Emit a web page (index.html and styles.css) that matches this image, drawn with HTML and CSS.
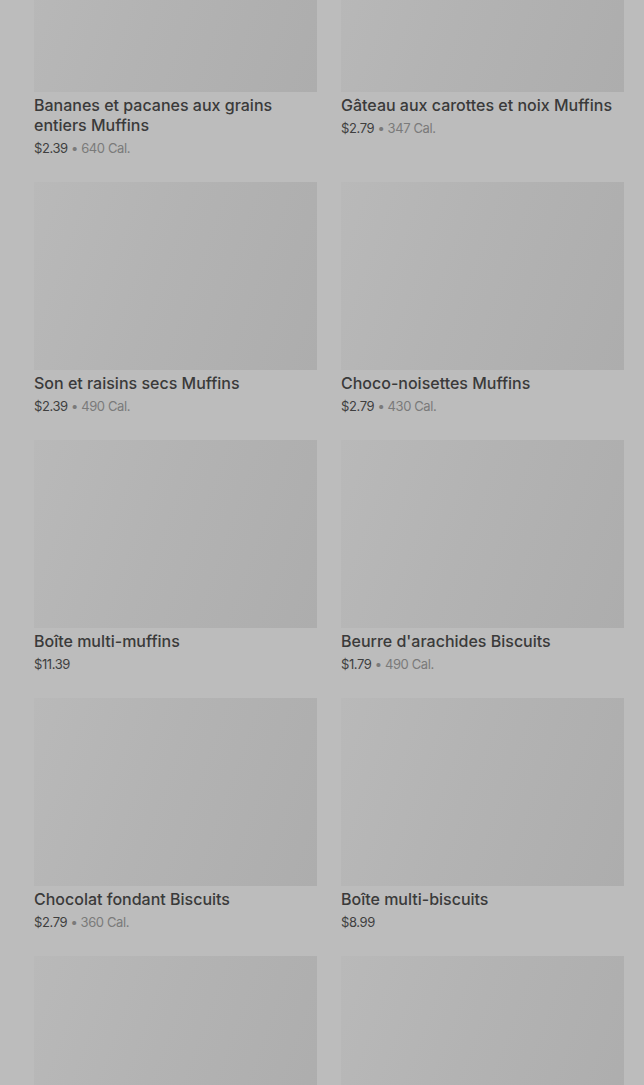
FILE: index.html
```html
<!DOCTYPE html>
<html lang="fr">
<head>
  <meta charset="UTF-8" />
  <title>Muffins et biscuits</title>
  <link rel="stylesheet" href="styles.css">
</head>
<body>
  <div class="menu-list">
    <div class="item">
      <div class="thumb"></div>
      <div class="name">Bananes et pacanes aux grains entiers Muffins</div>
      <div class="meta">$2.39 <span class="cal">• 640 Cal.</span></div>
    </div>
    <div class="item">
      <div class="thumb"></div>
      <div class="name">Gâteau aux carottes et noix Muffins</div>
      <div class="meta">$2.79 <span class="cal">• 347 Cal.</span></div>
    </div>

    <div class="item">
      <div class="thumb"></div>
      <div class="name">Son et raisins secs Muffins</div>
      <div class="meta">$2.39 <span class="cal">• 490 Cal.</span></div>
    </div>
    <div class="item">
      <div class="thumb"></div>
      <div class="name">Choco-noisettes Muffins</div>
      <div class="meta">$2.79 <span class="cal">• 430 Cal.</span></div>
    </div>

    <div class="item">
      <div class="thumb"></div>
      <div class="name">Boîte multi-muffins</div>
      <div class="meta">$11.39</div>
    </div>
    <div class="item">
      <div class="thumb"></div>
      <div class="name">Beurre d'arachides Biscuits</div>
      <div class="meta">$1.79 <span class="cal">• 490 Cal.</span></div>
    </div>

    <div class="item">
      <div class="thumb"></div>
      <div class="name">Chocolat fondant Biscuits</div>
      <div class="meta">$2.79 <span class="cal">• 360 Cal.</span></div>
    </div>
    <div class="item">
      <div class="thumb"></div>
      <div class="name">Boîte multi-biscuits</div>
      <div class="meta">$8.99</div>
    </div>

    <div class="item">
      <div class="thumb"></div>
    </div>
    <div class="item">
      <div class="thumb"></div>
    </div>
  </div>
</body>
</html>
```

FILE: styles.css
```css
body {
  margin: 0;
  background: #bcbcbc;
  font-family: Inter, 'Noto Sans', sans-serif;
  overflow: hidden;
}

/* list is scrolled: first row half hidden */
.menu-list {
  display: grid;
  grid-template-columns: 283px 283px;
  column-gap: 24px;
  row-gap: 24px;
  padding: 0 20px 0 34px;
  margin-top: -96px;
}

.thumb {
  height: 188px;
  background: linear-gradient(110deg, #b9b9b9 0%, #b3b3b3 45%, #adadad 100%);
}

.name {
  margin-top: 3px;
  font-size: 16px;
  line-height: 20px;
  font-weight: 500;
  color: #3a3a3a;
}

.meta {
  margin-top: 3px;
  font-size: 13px;
  line-height: 20px;
  letter-spacing: -0.4px;
  color: #3f3f3f;
}

.cal {
  color: #7a7a7a;
}
```
